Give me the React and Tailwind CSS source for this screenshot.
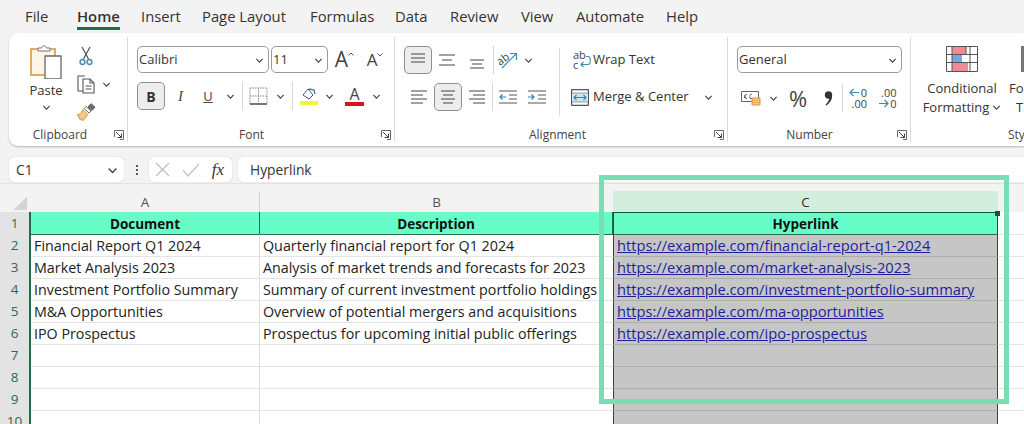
import React from "react";

const Chev = ({ size = 9, color = "#444" }) => (
  <svg width={size} height={size} viewBox="0 0 10 10" fill="none"><path d="M1.5 3.2 5 6.8l3.5-3.6" stroke={color} strokeWidth="1.3" /></svg>
);
const Slot = ({ w, children, className = "" }) => (
  <div className={`flex shrink-0 items-center justify-center ${className}`} style={{ width: w }}>{children}</div>
);
const Launcher = () => (
  <svg width="10" height="10" viewBox="0 0 10 10" fill="none"><path d="M.5 7V.5H9.5V9.500H6" stroke="#666" /><path d="M2 2l5.500 5.500M7.500 3.500v4h-4" stroke="#444" /></svg>
);
const Lines = ({ rows, w = 20, h = 20 }) => (
  <svg width={w} height={h} viewBox="0 0 20 20" fill="none" stroke="#444" strokeWidth="1.2">
    {rows.map(([x1, x2, y], i) => <path key={i} d={`M${x1} ${y}H${x2}`} />)}
  </svg>
);
const Btn = ({ w, active, children }) => (
  <div className={`flex h-[28px] shrink-0 items-center justify-center rounded-[5px] ${active ? "border border-[#8f8f8f] bg-[#ededed]" : ""}`} style={{ width: w }}>{children}</div>
);
const Select = ({ w, label }) => (
  <div className="flex h-[27px] shrink-0 items-center justify-between rounded-[5px] border border-[#9a9a9a] bg-white pl-[1px] pr-[4px] pt-[1px] text-[13px] text-[#333]" style={{ width: w }}>
    <span>{label}</span><Chev />
  </div>
);
const GroupLabel = ({ children, pr = 16 }) => (
  <div className="relative flex h-[15px] shrink-0 items-center justify-center text-[12px] text-[#444]" style={{ paddingRight: pr }}>
    {children}
    <div className="absolute right-[3px] top-[3px] flex"><Launcher /></div>
  </div>
);
const Sep = ({ h = 30 }) => <div className="w-px shrink-0 bg-[#d6d6d6]" style={{ height: h }} />;

const PasteIcon = () => (
  <svg width="34" height="36" viewBox="0 0 34 36" fill="none">
    <path d="M2 6h24v26H2z" fill="#fdf5e6" stroke="#e0ac62" strokeWidth="2" />
    <path d="M9 8V5h3.500c.5-3 4.500-3 5 0H21v3z" fill="#fff" stroke="#777" />
    <path d="M16 13h16v23H16z" fill="#fff" stroke="#666" strokeWidth="1.300" />
  </svg>
);
const Cut = () => (
  <svg width="14" height="20" viewBox="0 0 14 20" fill="none" stroke="#444" strokeWidth="1.100"><path d="M3 1l6.500 12M11 1L4.500 13" /><circle cx="3.500" cy="16" r="2.400" stroke="#4a8db5" strokeWidth="1.500" /><circle cx="10.500" cy="16" r="2.400" stroke="#4a8db5" strokeWidth="1.500" /></svg>
);
const Copy = () => (
  <svg width="19" height="19" viewBox="0 0 19 19" fill="none" stroke="#555" strokeWidth="1.100"><path d="M6 16H1V1h7" /><path d="M6 4h7l4 4v10H6z" fill="#fff" /><path d="M13 4v4h4M8.500 11h6M8.500 14h6" /></svg>
);
const Painter = () => (
  <svg width="19" height="18" viewBox="0 0 19 18" fill="none"><path d="M.5 11.500c2 0 4-1 5-5l5 4.500c-1 3-3 6-5.500 6.500l-.5-2-1.500 1z" fill="#f3c98c" stroke="#d8953c" /><path d="M7 5.500l5 4.500 2-2-5-4.500z" fill="#fff" stroke="#666" /><path d="M11 4l3-3.300 4 3.500-3 3.200z" fill="#6f6f6f" stroke="#555" /></svg>
);
const BigA = ({ size, mark }) => (
  <div className="relative flex h-[22px] items-center" >
    <span className="leading-none text-[#444]" style={{ fontSize: size }}>A</span>
    <svg width="6" height="5" viewBox="0 0 6 5" className="mb-[10px]" fill="none" stroke="#555"><path d={mark} /></svg>
  </div>
);
const Borders = () => (
  <svg width="19" height="18" viewBox="0 0 19 18" fill="none" stroke="#888" strokeDasharray="1.500 1"><path d="M1 1h17v16H1zM9.500 1v16M1 9h17" /><path d="M1 17h17" stroke="#555" strokeDasharray="none" strokeWidth="1.400" /></svg>
);
const Fill = () => (
  <svg width="18" height="20" viewBox="0 0 18 20" fill="none"><path d="M3 9l5-6 5 6-4 4z" fill="#fff" stroke="#555" /><path d="M9 3l5 1 1 4" stroke="#2e7ea6" strokeWidth="1.300" /><path d="M0 15h18v4H0z" fill="#f5f53a" /></svg>
);
const ColorA = () => (
  <div className="flex w-[19px] flex-col items-center">
    <span className="h-[14px] text-[16px] leading-[14px] text-[#444]">A</span>
    <div className="mt-[1px] h-[4px] w-[19px] bg-[#d4141f]" />
  </div>
);
const Orientation = () => (
  <svg width="22" height="20" viewBox="0 0 22 20" fill="none"><text x="0" y="13" transform="rotate(-38 6 10)" fontSize="11" fill="#444" fontFamily="Open Sans">ab</text><path d="M5 18 19 4M13 3.500h6.500V10" stroke="#3d8cae" strokeWidth="1.200" /></svg>
);
const Indent = ({ dir }) => (
  <svg width="18" height="14" viewBox="0 0 18 14" fill="none" stroke="#555" strokeWidth="1.200">
    <path d="M0 1h18M10 5h8M10 9h8M0 13h18" />
    <path d={dir < 0 ? "M7 7H1M3.500 4.500 1 7l2.500 2.500" : "M0 7h6M3.500 4.500 6 7 3.500 9.500"} stroke="#2e86ad" />
  </svg>
);
const WrapIcon = () => (
  <div className="relative h-[20px] w-[17px] shrink-0 text-[11px] leading-[10px] text-[#444]">
    <div>ab</div>
    <div>c</div>
    <svg width="11" height="13" viewBox="0 0 11 13" fill="none" className="absolute left-[7px] top-[6px]" stroke="#3d8cae" strokeWidth="1.100"><path d="M6 .5h2c3 0 3 8 0 8H1M3.500 6 1 8.500 3.500 11" /></svg>
  </div>
);
const MergeIcon = () => (
  <svg width="18" height="17" viewBox="0 0 18 17" fill="none"><path d="M.5.500h17v16H.5z" fill="#cfe5ee" stroke="#555" /><path d="M1 1h16v3H1zM1 13h16v3H1z" fill="#fff" stroke="#666" strokeWidth=".6" /><path d="M3 8.500h12M5.500 6 3 8.500 5.500 11M12.500 6 15 8.500 12.500 11" stroke="#2e86ad" strokeWidth="1.100" /></svg>
);
const Acct = () => (
  <svg width="20" height="16" viewBox="0 0 20 16" fill="none"><path d="M.5 1.500h17v10H.5z" fill="#fff" stroke="#666" /><path d="M6 4.500c-3-1-3 5 0 4M3 6h2M3 7.500h2M11 4.500c-2-1-2.500 1-2 4h3" stroke="#444" strokeWidth=".8" /><path d="M11 8h8v7h-8z" fill="#f3d08e" stroke="#d8953c" /><path d="M11 10.300h8M11 12.600h8" stroke="#d8953c" strokeWidth=".7" /></svg>
);
const Comma = () => (
  <svg width="9" height="15" viewBox="0 0 9 15" fill="#333"><circle cx="4.500" cy="4" r="3.700" /><path d="M5.500 1C9.500 3 9 10 2.500 14.500l-1-.8C5 10.500 5.500 8 5 6z" /></svg>
);
const Decimal = ({ top, bottom, dir }) => (
  <div className="relative flex w-[18px] flex-col items-end text-[11px] leading-[11px] text-[#444]">
    <span>{top}</span><span>{bottom}</span>
    <svg width="10" height="9" viewBox="0 0 10 9" fill="none" stroke="#3d8cae" strokeWidth="1.200" className={`absolute ${dir < 0 ? "left-0 top-[1px]" : "left-0 top-[12px]"}`}>
      <path d={dir < 0 ? "M10 4.500H1M4.500 1 1 4.500 4.500 8" : "M0 4.500h9M5.500 1 9 4.500 5.500 8"} />
    </svg>
  </div>
);
const CF = () => (
  <svg width="32" height="26" viewBox="0 0 32 26" fill="none">
    <path d="M.5.500h31v25H.5z" fill="#fff" stroke="#555" />
    <path d="M6 1h14v7H6zM6 17h16v8H6z" fill="#ef8c93" /><path d="M6 9h10v7H6z" fill="#7da7d6" />
    <path d="M0 8.500h32M0 16.500h32M6 0v26M20 0v8M24 0v26" stroke="#555" />
  </svg>
);

const Ribbon = () => (
  <div className="ml-[9px] flex h-[113px] overflow-hidden rounded-l-[9px] bg-white shadow-[0_1px_2px_rgba(0,0,0,0.25)]">
    {/* Clipboard */}
    <div className="my-[4px] flex w-[119px] shrink-0 flex-col border-r border-[#dcdcdc]">
      <div className="flex h-[90px] shrink-0">
        <div className="flex w-[62px] shrink-0 flex-col items-center pl-[12px] pt-[6px]">
          <PasteIcon />
          <span className="mt-[2px] text-[13px] leading-[18px] text-[#333]">Paste</span>
          <div className="flex h-[16px] items-center"><Chev /></div>
        </div>
        <div className="flex flex-col pt-[4px]">
          <Slot w={30} className="h-[30px]"><Cut /></Slot>
          <div className="flex h-[26px] items-center"><Slot w={30}><Copy /></Slot><Slot w={10}><Chev /></Slot></div>
          <Slot w={30} className="h-[30px]"><Painter /></Slot>
        </div>
      </div>
      <GroupLabel pr={16}>Clipboard</GroupLabel>
    </div>
    {/* Font */}
    <div className="my-[4px] flex w-[267px] shrink-0 flex-col border-r border-[#dcdcdc] pl-[9px]">
      <div className="h-[90px] shrink-0 pt-[9px]">
        <div className="flex items-center gap-[2px]">
          <Select w={132} label="Calibri" />
          <Select w={57} label="11" />
          <Slot w={29}><BigA size={21} mark="M.5 3.500 3 1l2.500 2.500" /></Slot>
          <Slot w={28}><BigA size={17} mark="M.5 1.500 3 4l2.500-2.500" /></Slot>
        </div>
        <div className="mt-[9px] flex items-center">
          <Btn w={28} active><span className="text-[14px] font-bold text-[#333]">B</span></Btn>
          <Slot w={31}><span className="font-['Liberation_Serif'] text-[15px] italic text-[#444]">I</span></Slot>
          <Slot w={24}><span className="text-[13px] leading-[17px] text-[#444] underline">U</span></Slot>
          <Slot w={20}><Chev /></Slot>
          <Slot w={4}><Sep h={28} /></Slot>
          <Slot w={28}><Borders /></Slot>
          <Slot w={16}><Chev /></Slot>
          <Slot w={8}><Sep h={28} /></Slot>
          <Slot w={26}><Fill /></Slot>
          <Slot w={14}><Chev /></Slot>
          <Slot w={9} />
          <ColorA />
          <Slot w={24}><Chev /></Slot>
        </div>
      </div>
      <GroupLabel pr={28}>Font</GroupLabel>
    </div>
    {/* Alignment */}
    <div className="my-[4px] flex w-[333px] shrink-0 flex-col border-r border-[#dcdcdc] pl-[9px]">
      <div className="flex h-[90px] shrink-0 pt-[9px]">
        <div className="flex w-[154px] shrink-0 flex-col">
          <div className="flex items-center">
            <Btn w={28} active><Lines rows={[[3, 17, 4], [3, 17, 8], [3, 17, 12]]} /></Btn>
            <Slot w={30}><Lines rows={[[2, 18, 5], [5, 15, 10], [2, 18, 15]]} /></Slot>
            <Slot w={30}><Lines rows={[[3, 17, 10], [5, 15, 14], [3, 17, 18]]} /></Slot>
            <Slot w={1} className="ml-[1px]"><Sep h={28} /></Slot>
            <Slot w={28}><Orientation /></Slot>
            <Slot w={12}><Chev /></Slot>
          </div>
          <div className="mt-[9px] flex items-center">
            <Slot w={30}><Lines rows={[[2, 18, 4], [2, 14, 8], [2, 18, 12], [2, 14, 16]]} /></Slot>
            <Btn w={28} active><Lines rows={[[3, 17, 4], [5, 15, 8], [3, 17, 12], [5, 15, 16]]} /></Btn>
            <Slot w={30}><Lines rows={[[2, 18, 4], [6, 18, 8], [2, 18, 12], [6, 18, 16]]} /></Slot>
            <Slot w={1}><Sep h={28} /></Slot>
            <Slot w={30}><Indent dir={-1} /></Slot>
            <Slot w={28}><Indent dir={1} /></Slot>
          </div>
        </div>
        <Slot w={1} className="ml-[1px] mt-[2px] h-[68px] bg-[#dadada]" />
        <div className="flex flex-col text-[13px] text-[#333]">
          <div className="flex h-[28px] items-center pl-[13px]"><WrapIcon /><span className="ml-[3px]">Wrap Text</span></div>
          <div className="mt-[9px] flex h-[28px] items-center pl-[11px]"><MergeIcon /><span className="ml-[4px]">Merge &amp; Center</span><div className="ml-[15px] flex"><Chev /></div></div>
        </div>
      </div>
      <GroupLabel pr={16}>Alignment</GroupLabel>
    </div>
    {/* Number */}
    <div className="my-[4px] flex w-[183px] shrink-0 flex-col border-r border-[#dcdcdc] pl-[9px]">
      <div className="h-[90px] shrink-0 pt-[9px]">
        <Select w={165} label="General" />
        <div className="mt-[11px] flex items-center">
          <Slot w={28}><Acct /></Slot>
          <Slot w={16}><Chev /></Slot>
          <Slot w={34}><span className="text-[22px] leading-[24px] text-[#444]">%</span></Slot>
          <Slot w={26}><Comma /></Slot>
          <Slot w={1} className="ml-[1px]"><Sep h={28} /></Slot>
          <Slot w={30}><Decimal top="0" bottom=".00" dir={-1} /></Slot>
          <Slot w={29}><Decimal top=".00" bottom="0" dir={1} /></Slot>
        </div>
      </div>
      <GroupLabel pr={28}>Number</GroupLabel>
    </div>
    {/* Styles */}
    <div className="my-[4px] flex min-w-0 flex-1 flex-col">
      <div className="flex h-[90px] shrink-0 pt-[9px] text-[13px] leading-[19px] text-[#333]">
        <div className="flex w-[97px] shrink-0 flex-col items-center pl-[5px]">
          <CF />
          <span className="mt-[7px]">Conditional</span>
          <span className="flex items-center gap-[3px] whitespace-nowrap">Formatting <Chev /></span>
        </div>
        <div className="flex flex-col whitespace-nowrap pl-[1px]">
          <div className="ml-[12px] h-[26px] w-[3px] bg-[#777]" />
          <span className="mt-[7px]">Fo</span>
          <span className="pl-[7px]">Ta</span>
        </div>
      </div>
      <div className="flex h-[15px] shrink-0 items-center whitespace-nowrap pl-[97px] text-[12px] text-[#444]">Styles</div>
    </div>
  </div>
);

const FormulaBar = () => (
  <div className="mt-[11px] flex h-[25px] items-stretch text-[13.800px] text-[#333]">
    <div className="ml-[9px] flex w-[115px] shrink-0 items-center justify-between rounded-[5px] bg-white pl-[7px] pr-[6px] pt-[1px] shadow-[0_0_1px_rgba(0,0,0,0.3)]">
      <span>C1</span><Chev size={11} />
    </div>
    <div className="flex w-[25px] shrink-0 flex-col items-center justify-center gap-[2px]">
      <i className="h-[2px] w-[2px] bg-[#555]" /><i className="h-[2px] w-[2px] bg-[#555]" /><i className="h-[2px] w-[2px] bg-[#555]" />
    </div>
    <div className="flex w-[83px] shrink-0 items-center rounded-[5px] bg-white shadow-[0_0_1px_rgba(0,0,0,0.3)]">
      <Slot w={27}><svg width="15" height="15" viewBox="0 0 15 15" stroke="#bdbdbd" strokeWidth="1.200"><path d="M1 1l13 13M14 1 1 14" /></svg></Slot>
      <Slot w={29}><svg width="18" height="14" viewBox="0 0 18 14" fill="none" stroke="#c4c4c4" strokeWidth="1.200"><path d="M1 7l5 6L17 1" /></svg></Slot>
      <Slot w={26}><span className="font-['Liberation_Serif'] text-[17px] italic text-[#333]">fx</span></Slot>
    </div>
    <div className="ml-[6px] flex min-w-0 flex-1 items-center rounded-l-[5px] bg-white pl-[12px] pt-[1px] shadow-[0_0_1px_rgba(0,0,0,0.3)]">Hyperlink</div>
  </div>
);

const COLS = "grid-cols-[31px_229px_353px_385px_26px] grid-rows-[22px]";
const rows = [
  ["Financial Report Q1 2024", "Quarterly financial report for Q1 2024", "financial-report-q1-2024"],
  ["Market Analysis 2023", "Analysis of market trends and forecasts for 2023", "market-analysis-2023"],
  ["Investment Portfolio Summary", "Summary of current investment portfolio holdings", "investment-portfolio-summary"],
  ["M&A Opportunities", "Overview of potential mergers and acquisitions", "ma-opportunities"],
  ["IPO Prospectus", "Prospectus for upcoming initial public offerings", "ipo-prospectus"],
  ["", "", ""], ["", "", ""], ["", "", ""], ["", "", ""],
];

const Sheet = () => (
  <div className="mt-[1px] border-t border-[#e2e2e2] pt-[7px]">
    <div className={`grid ${COLS} h-[21px] grid-rows-[21px] text-center text-[13.500px] text-[#555]`}>
      <div className="flex items-end justify-end pb-[3px] pr-[4px]"><div className="h-[13px] w-[13px] bg-[linear-gradient(135deg,transparent_50%,#d4d4d4_50%)]" /></div>
      <div className="border-r border-[#d4d4d4] leading-[22px]">A</div>
      <div className="leading-[22px]">B</div>
      <div className="bg-[#d3eedf] leading-[22px] text-[#333]">C</div>
      <div />
    </div>
    <div className={`grid ${COLS} h-[22px] text-center text-[13.500px] font-bold leading-[21px] text-[#111]`}>
      <div className="border-r-2 border-[#1f6b4a] bg-[#e3e3e3] pt-[1px] font-normal text-[#2a6b4e]">1</div>
      <div className="border-r border-[#1f6b4a] bg-[#66fdc9] pt-[2px]">Document</div>
      <div className="border-r border-[#1f6b4a] bg-[#66fdc9] pt-[2px]">Description</div>
      <div className="relative border border-b-0 border-[#17553a] bg-[#66fdc9] pt-[1px]">Hyperlink<div className="absolute -right-[3px] -top-[2px] h-[5px] w-[5px] bg-[#17553a]" /></div>
      <div className="bg-white font-normal" />
    </div>
    {rows.map((r, i) => (
      <div key={i} className={`grid ${COLS} h-[22px] text-[14.300px] leading-[21px] text-[#222]`}>
        <div className="border-r-2 border-[#1f6b4a] bg-[#e3e3e3] pt-[1px] text-center text-[13.500px] text-[#2a6b4e]">{i + 2}</div>
        <div className={`whitespace-nowrap border-r border-[#dcdcdc] bg-white pl-[3px] ${i === 0 ? "border-t border-t-[#2f6b4f]" : "border-t border-t-[#e4e4e4]"}`}>{r[0]}</div>
        <div className={`whitespace-nowrap bg-white pl-[3px] ${i === 0 ? "border-t border-t-[#2f6b4f]" : "border-t border-t-[#e4e4e4]"}`}>{r[1]}</div>
        <div className={`whitespace-nowrap border-x border-x-[#17553a] bg-[#c6c6c6] pl-[3px] text-[14.700px] text-[#1f1f9e] underline ${i === 0 ? "border-t border-t-[#2f6b4f]" : "border-t border-t-[#adadad]"}`}>
          {r[2] && `https://example.com/${r[2]}`}
        </div>
        <div className="border-t border-t-[#e4e4e4] bg-white" />
      </div>
    ))}
  </div>
);

const tabs = [["File", 25], ["Home", 77], ["Insert", 141], ["Page Layout", 202], ["Formulas", 310], ["Data", 395], ["Review", 450], ["View", 521], ["Automate", 576], ["Help", 666]];

export default function App() {
  return (
    <div className="relative h-[424px] w-[1024px] overflow-hidden bg-[#f3f3f3] font-['Open_Sans','Noto_Sans',sans-serif]">
      <div className="flex h-[33px] pl-[25px] pt-[5px] text-[14.800px] text-[#333]">
        {tabs.map(([t, x], i) => (
          <div key={t} className="flex h-[27px] shrink-0 flex-col items-start" style={{ width: i < tabs.length - 1 ? tabs[i + 1][1] - x : undefined }}>
            <span className={`whitespace-nowrap leading-[22px] ${t === "Home" ? "border-b-[3px] border-[#1f6b4a] font-semibold" : ""}`}>{t}</span>
          </div>
        ))}
      </div>
      <Ribbon />
      <FormulaBar />
      <Sheet />
      <div className="absolute left-[599px] top-[175px] h-[229px] w-[410px] border-[5px] border-[#78deb4]" />
    </div>
  );
}
